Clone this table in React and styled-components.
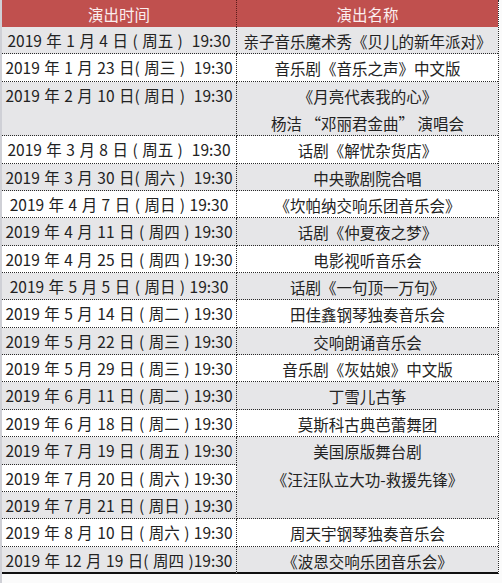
import React from "react";
import styled, { createGlobalStyle } from "styled-components";

const UNIT = 27.35;

const shows = [
  { date: "2019 年 1 月 4 日 ( 周五 )  19:30", name: ["亲子音乐魔术秀《贝儿的新年派对》"] },
  { date: "2019 年 1 月 23 日( 周三 )  19:30", name: ["音乐剧《音乐之声》中文版"] },
  { date: "2019 年 2 月 10 日( 周日 )  19:30", name: ["《月亮代表我的心》", "杨洁 “邓丽君金曲” 演唱会"], span: 2 },
  { date: "2019 年 3 月 8 日 ( 周五 )  19:30", name: ["话剧《解忧杂货店》"] },
  { date: "2019 年 3 月 30 日( 周六 )  19:30", name: ["中央歌剧院合唱"] },
  { date: "2019 年 4 月 7 日 ( 周日 ) 19:30", name: ["《坎帕纳交响乐团音乐会》"] },
  { date: "2019 年 4 月 11 日 ( 周四 ) 19:30", name: ["话剧《仲夏夜之梦》"] },
  { date: "2019 年 4 月 25 日 ( 周四 ) 19:30", name: ["电影视听音乐会"] },
  { date: "2019 年 5 月 5 日 ( 周日 ) 19:30", name: ["话剧《一句顶一万句》"] },
  { date: "2019 年 5 月 14 日 ( 周二 ) 19:30", name: ["田佳鑫钢琴独奏音乐会"] },
  { date: "2019 年 5 月 22 日 ( 周三 ) 19:30", name: ["交响朗诵音乐会"] },
  { date: "2019 年 5 月 29 日 ( 周三 ) 19:30", name: ["音乐剧《灰姑娘》中文版"] },
  { date: "2019 年 6 月 11 日 ( 周二 ) 19:30", name: ["丁雪儿古筝"] },
  { date: "2019 年 6 月 18 日 ( 周二 ) 19:30", name: ["莫斯科古典芭蕾舞团"] },
  { date: "2019 年 7 月 19 日 ( 周五 ) 19:30", name: ["美国原版舞台剧", "《汪汪队立大功-救援先锋》"], nameSpan: 3 },
  { date: "2019 年 7 月 20 日 ( 周六 ) 19:30", skipName: true },
  { date: "2019 年 7 月 21 日 ( 周日 ) 19:30", skipName: true },
  { date: "2019 年 8 月 10 日 ( 周六 ) 19:30", name: ["周天宇钢琴独奏音乐会"] },
  { date: "2019 年 12 月 19 日( 周四 )19:30", name: ["《波恩交响乐团音乐会》"] },
];

const App = () => {
  const cells = [];
  shows.forEach((s, i) => {
    const span = s.span || 1;
    const grey = i % 2 === 0;
    const last = i === shows.length - 1;
    cells.push(
      <DateCell key={`d${i}`} $span={span} $grey={grey} $last={last}>
        {s.date}
      </DateCell>
    );
    if (!s.skipName) {
      cells.push(
        <NameCell key={`n${i}`} $span={s.nameSpan || span} $grey={grey} $last={last}>
          {s.name.map(line => (
            <Line key={line}>{line}</Line>
          ))}
        </NameCell>
      );
    }
  });

  return (
    <>
      <GlobalStyle />
      <Page>
        <Table>
          <Head $divider>演出时间</Head>
          <Head>演出名称</Head>
          {cells}
        </Table>
      </Page>
    </>
  );
};

const GlobalStyle = createGlobalStyle`
  html, body {
    margin: 0;
    padding: 0;
    background: #fff;
  }
  body {
    font-family: "Noto Sans CJK SC", "Noto Sans", sans-serif;
    color: #222;
  }
`;

const Page = styled.div`
  width: 502px;
  height: 583px;
  overflow: hidden;
  box-sizing: border-box;
  border-left: 2px solid #cfd0d6;
  background: #fbfbfb;
`;

const Table = styled.div`
  display: grid;
  grid-template-columns: 235px 261px;
  grid-template-rows: 27px;
  grid-auto-rows: ${UNIT}px;
  width: 496px;
  border-right: 1px dotted #2a2a2a;
`;

const Head = styled.div`
  background: #c0504e;
  color: #fbeeee;
  font-size: 15.5px;
  display: flex;
  align-items: center;
  justify-content: center;
  border-right: ${props => (props.$divider ? "1px dotted #5a1c1a" : "none")};
`;

const Cell = styled.div`
  box-sizing: border-box;
  grid-row: span ${props => props.$span};
  background: ${props => (props.$grey ? "#e6e6e8" : "#ffffff")};
  border-bottom: ${props => (props.$last ? "2px solid #111" : "1px dotted #2a2a2a")};
  text-align: center;
  white-space: pre;
  line-height: ${UNIT - 1}px;
  font-size: 15.5px;
`;

const DateCell = styled(Cell)`
  border-right: 1px dotted #2a2a2a;
  word-spacing: 1px;
`;

const NameCell = styled(Cell)`
  padding-top: 1px;
`;

const Line = styled.div`
  height: ${UNIT}px;
  line-height: ${UNIT - 1}px;
`;

export default App;
